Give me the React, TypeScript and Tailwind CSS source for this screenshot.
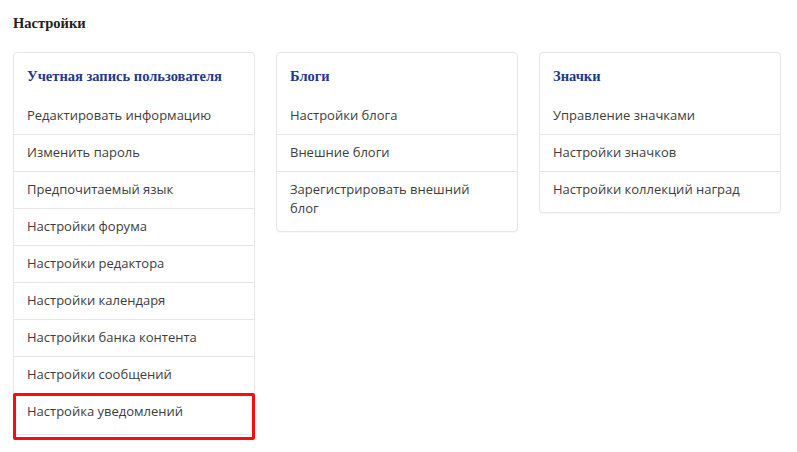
const groups = [
  {
    title: "Учетная запись пользователя",
    items: [
      "Редактировать информацию",
      "Изменить пароль",
      "Предпочитаемый язык",
      "Настройки форума",
      "Настройки редактора",
      "Настройки календаря",
      "Настройки банка контента",
      "Настройки сообщений",
      "Настройка уведомлений",
    ],
    marked: 8,
  },
  {
    title: "Блоги",
    items: ["Настройки блога", "Внешние блоги", "Зарегистрировать внешний блог"],
  },
  {
    title: "Значки",
    items: ["Управление значками", "Настройки значков", "Настройки коллекций наград"],
  },
];

function Card({ title, items, marked }: { title: string; items: string[]; marked?: number }) {
  return (
    <div className="w-[242px] border border-[#e6e6e6] rounded-[4px] bg-white pb-[4px] shadow-[0_1px_1px_rgba(0,0,0,0.03)]">
      <h3 className="px-[13px] pt-[14px] pb-[12px] text-[14.5px] leading-[18px] font-bold text-[#1d3a8c] font-['Liberation_Serif','DejaVu_Serif',serif]">
        {title}
      </h3>
      {items.map((item, i) => (
        <div
          key={item}
          className={`relative pl-[13px] pr-[30px] py-[9px] text-[13px] leading-[19px] text-[#3d3d3d] ${i > 0 ? "border-t border-[#e6e6e6] pt-[8px]" : ""}`}
        >
          {item}
          {marked === i && (
            <div className="absolute -left-px -right-px -top-px -bottom-[10px] border-[3px] border-[#ff0a0a] rounded-[2px]" />
          )}
        </div>
      ))}
    </div>
  );
}

export default function App() {
  return (
    <div className="w-[797px] h-[452px] bg-white overflow-hidden px-[13px] pt-[14px] font-['Open_Sans','Noto_Sans',sans-serif]">
      <h1 className="text-[14.5px] leading-[18px] font-bold text-[#222] font-['Liberation_Serif','DejaVu_Serif',serif]">
        Настройки
      </h1>
      <div className="mt-[20px] flex items-start gap-[21px]">
        {groups.map((g) => (
          <Card key={g.title} {...g} />
        ))}
      </div>
    </div>
  );
}
